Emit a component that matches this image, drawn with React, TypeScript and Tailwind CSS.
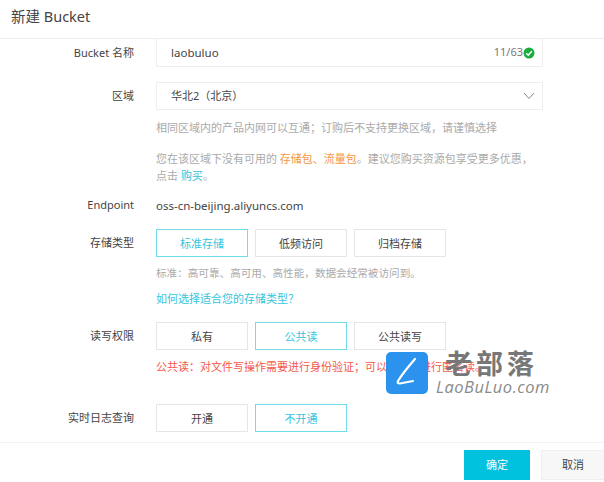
import React from 'react';

const FONT = "font-['Noto_Sans','Noto_Sans_CJK_SC',sans-serif]";

function Row({ label, children, className }: { label: string; children: React.ReactNode; className: string }) {
  return (
    <div className={`flex ${className}`}>
      <div className="w-[134px] h-7 shrink-0 flex items-center justify-end text-[11px] text-[#444]">{label}</div>
      <div className="ml-[22px] w-[387px]">{children}</div>
    </div>
  );
}

function Option({ text, active }: { text: string; active?: boolean }) {
  return (
    <div
      className={`w-[92px] h-7 pt-[2px] flex items-center justify-center text-[11px] border ${
        active ? 'border-[#6fdcec] text-[#35c5dc] border-[1.5px]' : 'border-[#e6e6e6] text-[#444]'
      }`}
    >
      {text}
    </div>
  );
}

export default function App() {
  return (
    <div className={`relative w-[604px] h-[482px] overflow-hidden bg-white ${FONT}`}>
      {/* 标题 */}
      <div className="h-[39px] border-b border-[#eeeeee] pl-[11px] pb-[4px] flex items-center text-[14.5px] text-[#444]">新建 Bucket</div>

      <Row label="Bucket 名称" className="">
        <div className="h-7 border border-[#eeeeee] border-t-0 flex items-center pl-[14px] pr-[7px] text-[11.5px] text-[#444]">
          <span className="flex-1">laobuluo</span>
          <span className="text-[11px] text-[#777]">11/63</span>
          <svg className="w-3 h-3" viewBox="0 0 12 12">
            <circle cx="6" cy="6" r="5.5" fill="#1aad3c" />
            <path d="M3.2 6.2l2 2 3.6-4" fill="none" stroke="#fff" strokeWidth="1.6" />
          </svg>
        </div>
      </Row>

      <Row label="区域" className="mt-[15px]">
        <div className="h-7 border border-[#eeeeee] flex items-center pl-[14px] pr-[7px] text-[11px] text-[#444]">
          <span className="flex-1">华北2（北京）</span>
          <svg className="w-[12px] h-[8px]" viewBox="0 0 12 8">
            <path d="M1 1l5 5.5L11 1" fill="none" stroke="#888" strokeWidth="1" />
          </svg>
        </div>
        <p className="mt-[10px] h-4 text-[11px] leading-4 text-[#aaa] whitespace-nowrap">
          相同区域内的产品内网可以互通；订购后不支持更换区域，请谨慎选择
        </p>
        <p className="mt-[14px] text-[11px] leading-[17px] text-[#aaa] whitespace-nowrap">
          您在该区域下没有可用的 <span className="text-[#f5973c]">存储包</span>
          <span className="text-[#f5973c]">、流量包</span>。建议您购买资源包享受更多优惠，
          <br />
          点击 <span className="text-[#35c5dc]">购买</span>。
        </p>
      </Row>

      <div className="flex mt-[13px] items-center h-[17px]">
        <div className="w-[134px] shrink-0 text-right text-[11px] text-[#444]">Endpoint</div>
        <div className="ml-[22px] text-[11.5px] text-[#444]">oss-cn-beijing.aliyuncs.com</div>
      </div>

      <Row label="存储类型" className="mt-[15px]">
        <div className="flex gap-[7px]">
          <Option text="标准存储" active />
          <Option text="低频访问" />
          <Option text="归档存储" />
        </div>
        <p className="mt-[8px] h-4 text-[10.600px] leading-4 text-[#aaa]">标准：高可靠、高可用、高性能，数据会经常被访问到。</p>
        <p className="mt-[10px] h-4 text-[11px] leading-4 text-[#35c5dc]">如何选择适合您的存储类型？</p>
      </Row>

      <Row label="读写权限" className="mt-[15px]">
        <div className="flex gap-[7px]">
          <Option text="私有" />
          <Option text="公共读" active />
          <Option text="公共读写" />
        </div>
        <p className="mt-[9px] h-4 text-[11px] leading-4 text-[#f5574a] whitespace-nowrap">
          公共读：对文件写操作需要进行身份验证；可以对文件进行匿名读。
        </p>
      </Row>

      <Row label="实时日志查询" className="mt-[29px]">
        <div className="flex gap-[7px]">
          <Option text="开通" />
          <Option text="不开通" active />
        </div>
      </Row>

      {/* 底部按钮 */}
      <div className="mt-[10px] h-[40px] border-t border-[#f2f2f2] flex justify-end pt-[7px] gap-[11px]">
        <div className="w-[66px] h-[30px] bg-[#00c1de] text-white text-[11px] flex items-center justify-center">确定</div>
        <div className="w-[63px] h-[30px] bg-[#f7f7f7] border border-[#eeeeee] border-r-0 text-[#444] text-[11px] flex items-center justify-center">
          取消
        </div>
      </div>

      {/* 水印 */}
      <div className="absolute left-[386px] top-[352px] flex">
        <div className="w-[42px] h-[42px] rounded-[5px] bg-[#2b93ee] flex items-center justify-center">
          <svg className="w-[42px] h-[42px]" viewBox="0 0 42 42">
            <path d="M29 7C22 15 15 24 12 29c-1 2 0 2.500 2 2.500L27 29" fill="none" stroke="#fff" strokeWidth="2.200" strokeLinecap="round" />
          </svg>
        </div>
        <div className="ml-[8px] -mt-[2px]">
          <div className="pl-[9px] text-[27px] leading-[28px] font-bold tracking-[4px] text-[#777]">老部落</div>
          <div className="text-[16.500px] leading-[18px] italic tracking-[0.5px] text-[#8a8a8a] font-['Open_Sans',sans-serif]">LaoBuLuo.com</div>
        </div>
      </div>
    </div>
  );
}
